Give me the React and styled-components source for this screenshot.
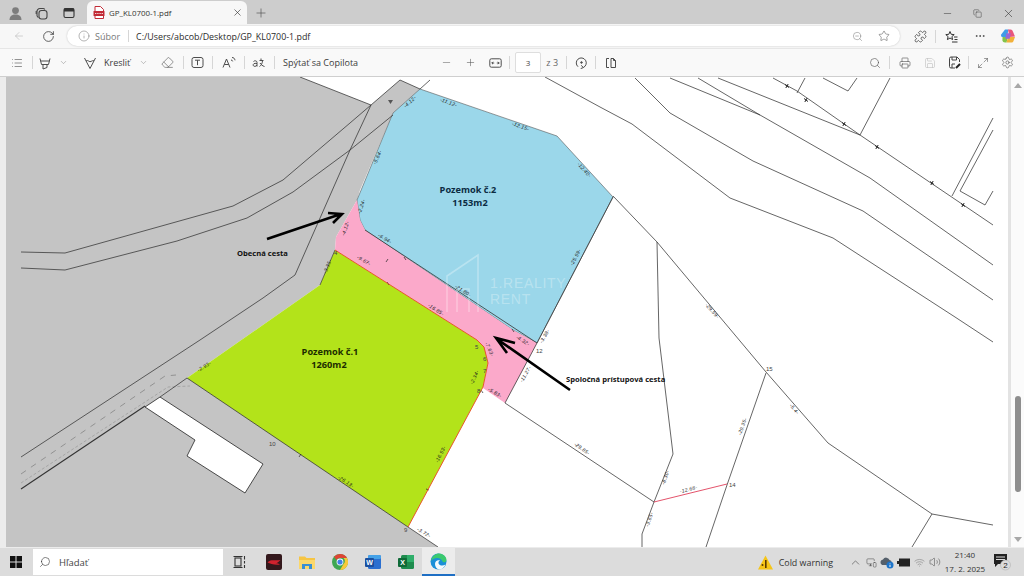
import styled, { createGlobalStyle } from 'styled-components';
import {
  ArrowLeft, ChevronDown, ChevronUp, Ellipsis, Eraser, Info, List, Maximize2, Minus, Plus, Printer,
  Puzzle, RotateCw, Save, Search, Settings, Star, Volume2, Wifi, X, ZoomOut, Copy, MonitorSmartphone,
} from 'lucide-react';

const GlobalStyle = createGlobalStyle`
  html, body {
    margin: 0;
    width: 1024px;
    height: 576px;
    overflow: hidden;
    background: #ffffff;
    font-family: "Open Sans", "Liberation Sans", sans-serif;
  }
`;

const Screen = styled.div`
  display: flex;
  flex-direction: column;
  width: 1024px;
  height: 576px;
`;

const TabStrip = styled.div`
  display: flex;
  align-items: flex-end;
  height: 24px;
  flex: none;
  padding-left: 5px;
  background: #cdcdcd;
  box-sizing: border-box;
`;

const Slot = styled.div`
  display: flex;
  align-items: center;
  justify-content: center;
  flex: none;
  width: ${(p) => p.$w || 18}px;
  height: ${(p) => p.$h || 22}px;
  margin-left: ${(p) => p.$ml || 0}px;
  color: ${(p) => p.$color || '#4d4d4d'};
`;

const Tab = styled.div`
  display: flex;
  align-items: center;
  width: 160px;
  height: 23px;
  margin-left: 8px;
  padding: 0 4px 0 6px;
  box-sizing: border-box;
  background: #f7f7f7;
  border-radius: 6px 6px 0 0;
`;

const TabTitle = styled.span`
  flex: 1;
  margin-left: 4px;
  font-size: 7.9px;
  color: #333333;
`;

const Spacer = styled.div`
  flex: 1;
`;

const AddressRow = styled.div`
  display: flex;
  align-items: center;
  height: 24px;
  flex: none;
  padding-left: 9px;
  background: #f7f7f7;
  box-sizing: border-box;
`;

const AddressPill = styled.div`
  display: flex;
  align-items: center;
  width: 833px;
  height: 20px;
  margin-left: 9px;
  padding-left: 11px;
  box-sizing: border-box;
  background: #ffffff;
  border-radius: 10px;
  box-shadow: 0 0 2px rgba(0, 0, 0, 0.22);
`;

const Scheme = styled.span`
  margin-left: 5px;
  font-size: 9px;
  color: #777777;
`;

const Url = styled.span`
  font-size: 8.9px;
  color: #2b2b2b;
`;

const Rule = styled.div`
  flex: none;
  width: 1px;
  height: ${(p) => p.$h || 13}px;
  margin-left: ${(p) => p.$ml || 0}px;
  margin-right: ${(p) => p.$mr || 0}px;
  background: #d6d6d6;
`;

const PdfBar = styled.div`
  display: flex;
  align-items: center;
  height: 29px;
  flex: none;
  padding-left: 6px;
  background: #f9f9f9;
  border-top: 1px solid #e6e6e6;
  border-bottom: 1px solid #cfcfcf;
  box-sizing: border-box;
`;

const BarText = styled.span`
  flex: none;
  width: ${(p) => p.$w}px;
  margin-left: ${(p) => p.$ml || 0}px;
  font-size: 9px;
  white-space: nowrap;
  color: ${(p) => p.$color || '#3b3b3b'};
`;

const PageBox = styled.div`
  display: flex;
  align-items: center;
  justify-content: center;
  flex: none;
  width: 26px;
  height: 21px;
  margin-left: 5px;
  font-size: 8px;
  color: #444444;
  background: #ffffff;
  border: 1px solid #dedede;
  border-radius: 2px;
  box-sizing: border-box;
`;

const Viewer = styled.div`
  display: flex;
  flex: 1;
  min-height: 0;
  background: #e9e9e9;
`;

const LeftGutter = styled.div`
  flex: none;
  width: 6px;
  background: #ececec;
`;

const MapPage = styled.svg`
  display: block;
  flex: none;
  width: 1002px;
  height: 470px;
  background: #ffffff;
`;

const ScrollTrack = styled.div`
  display: flex;
  flex-direction: column;
  align-items: center;
  flex: none;
  width: 16px;
  height: 470px;
  padding: 6px 0 5px;
  box-sizing: border-box;
  background: #fbfbfb;
  border-left: 3px solid #e3e3e3;
`;

const ScrollArrow = styled.div`
  flex: none;
  width: 0;
  height: 0;
  border-left: 4px solid transparent;
  border-right: 4px solid transparent;
  ${(p) => (p.$down ? 'border-top: 5px solid #a8a8a8;' : 'border-bottom: 5px solid #a8a8a8;')}
`;

const ThumbLane = styled.div`
  flex: 1;
`;

const Thumb = styled.div`
  width: 6px;
  height: 96px;
  margin-top: 308px;
  background: #8e8e8e;
  border-radius: 3px;
`;

const Taskbar = styled.div`
  display: flex;
  align-items: center;
  height: 29px;
  flex: none;
  padding-left: 6px;
  background: #dcdcdc;
  border-top: 1px solid #ececec;
  box-sizing: border-box;
`;

const SearchBox = styled.div`
  display: flex;
  align-items: center;
  flex: none;
  width: 190px;
  height: 26px;
  margin-left: 7px;
  padding-left: 6px;
  box-sizing: border-box;
  background: #ffffff;
  font-size: 9.5px;
  color: #444444;
`;

const SearchGlyph = styled(Search)`
  transform: scaleX(-1);
`;

const SearchLabel = styled.span`
  margin-left: 8px;
`;

const TaskApp = styled.div`
  display: flex;
  align-items: center;
  justify-content: center;
  flex: none;
  width: 33px;
  height: 28px;
  box-sizing: border-box;
  margin-left: ${(p) => p.$ml || 0}px;
  ${(p) => p.$active && 'background: #ececec; border-bottom: 2px solid #1f6fc4;'}
`;

const Weather = styled.span`
  flex: none;
  margin-left: 6px;
  font-size: 8.9px;
  color: #333333;
`;

const Clock = styled.div`
  display: flex;
  flex-direction: column;
  align-items: center;
  flex: none;
  width: 44px;
  font-size: 8px;
  line-height: 14px;
  color: #333333;
`;

const PlotLabel = styled.text`
  font-family: "Open Sans", "Liberation Sans", sans-serif;
  font-size: 9.2px;
  font-weight: 700;
  text-anchor: middle;
  fill: ${(p) => p.$fill};
`;

const NoteLabel = styled.text`
  font-family: "Open Sans", "Liberation Sans", sans-serif;
  font-size: 7.6px;
  font-weight: 700;
  fill: #111111;
`;

const DimLabel = styled.text`
  font-family: "Liberation Sans", sans-serif;
  font-size: 5px;
  font-style: italic;
  letter-spacing: 0.3px;
  text-anchor: middle;
  fill: #1c1c1c;
`;

const PointLabel = styled.text`
  font-family: "Liberation Sans", sans-serif;
  font-size: 6px;
  fill: #444444;
`;

const Watermark = styled.text`
  font-family: "Liberation Sans", sans-serif;
  font-size: 14px;
  letter-spacing: 0.7px;
  fill: #ffffff;
  fill-opacity: 0.3;
`;

const dims = [
  ['-4.12-', 411, 103, -42], ['-11.12-', 448, 104, 20], ['-12.15-', 520, 128, 20], ['-12.40-', 583, 171, 48],
  ['-5.64-', 379, 158, -65], ['-2.24-', 363, 207, -70], ['-6.94-', 384, 240, 30], ['-21.80-', 462, 292, 32],
  ['-4.32-', 522, 342, 32], ['-25.59-', 577, 258, -62], ['-3.38-', 546, 337, -60], ['-9.67-', 363, 262, 30],
  ['-16.85-', 435, 311, 32], ['-11.27-', 527, 375, -60], ['-5.83-', 494, 394, 30], ['-2.34-', 476, 378, -65],
  ['-7.63-', 488, 350, 65], ['-29.85-', 581, 450, 35], ['-29.59-', 711, 312, 48], ['-5.4-', 793, 410, 50],
  ['-29.35-', 744, 427, -70], ['-8.30-', 667, 478, -70], ['-12.68-', 689, 491, -15], ['-3.65-', 651, 520, -70],
  ['-26.13-', 345, 483, 33], ['-16.53-', 442, 455, -63], ['-3.72-', 423, 534, 30], ['-2.93-', 205, 368, -30],
  ['-3.35-', 329, 267, -68], ['-4.12-', 347, 229, -70],
];

const points = [
  ['12', 536, 353], ['15', 766, 371], ['14', 729, 487], ['10', 269, 446], ['9', 404, 532], ['4', 334, 255],
  ['5', 475, 349], ['6', 483, 361], ['7', 483, 373], ['8', 477, 393],
];

const crosses = [[787, 86], [806, 100], [844, 124], [877, 147], [932, 183], [963, 205]];

const ticks = ['404,257 406,260', '387,282 389,285', '512,329 514,332', '481,390 483,393', '386,262 388,259', '301,454 299,457', '429,490 426,489'];

const lines = [
  '300,77 371,105', '21,252 65,253 233,206 283,180 350,123 371,105 400,80',
  '21,268 65,270 177,241 247,218 293,192 350,150 393,115',
  '200,340 263,298 295,275 350,150 371,105', '21,457 200,340', '400,80 420,89 430,80',
  '545,77 600,107 632,124 730,198 833,238 955,317 993,342', '635,78 670,113 753,161 863,211 993,300',
  '698,78 760,115 870,178 993,265', '670,78 760,115', '718,78 860,135', '773,78 797,91 860,135 993,225',
  '890,78 860,135', '797,93 805,78', '823,78 848,91 857,78', '993,118 952,196',
  '993,130 960,191 985,205 993,191', '613,196 657,242 766,372 828,443 932,514 993,525', '932,514 912,547',
  '657,242 659,338 673,454 654,502 642,534 642,547', '766,373 727,485 706,547', '505,403 654,502',
  '408,527 438,547', '537,343 505,403', '613,197 537,343', '160,397 187,378',
];

const LandMap = () => (
  <MapPage viewBox="6 77 1002 470">
    <polygon fill="#c4c4c4" points="6,77 300,77 371,105 400,80 420,89 393,113 360,190 357,200 336,237 335,250 320,285 187,378 408,527 438,547 6,547" />
    <polygon fill="#ffffff" points="145,407 160,397 263,464 245,493 187,456 195,440" stroke="#222222" strokeWidth="0.8" />
    <polygon fill="#9bd7ea" stroke="#555555" strokeWidth="0.6" points="420,89 557,136 613,197 537,343 513,330 365,230 360,220 357,200 393,113" />
    <polygon fill="#fba9ca" points="357,200 360,220 365,230 513,330 537,343 505,403 483,388 488,363 477,340 335,250 336,237" />
    <polygon fill="#b3e31a" points="335,250 477,340 484,347 488,363 483,387 408,527 187,378 320,285" />
    <polyline fill="none" stroke="#333333" strokeWidth="0.8" points="187,378 408,527" />
    <polyline fill="none" stroke="#333333" strokeWidth="0.8" points="365,230 537,343" />
    <polyline fill="none" stroke="#333333" strokeWidth="0.7" points="320,285 335,250" />
    <polyline fill="none" stroke="#333333" strokeWidth="1.1" points="21,489 145,406" />
    <polyline fill="none" stroke="#6f6f6f" strokeWidth="0.6" strokeDasharray="6 6" points="21,474 165,376 176,375" />
    <polyline fill="none" stroke="#808080" strokeWidth="0.45" strokeDasharray="3 2" points="21,483 168,387 190,386" />
    {lines.map((pts) => (
      <polyline key={pts} fill="none" stroke="#333333" strokeWidth="0.75" points={pts} />
    ))}
    {ticks.map((pts) => (
      <polyline key={pts} fill="none" stroke="#222222" strokeWidth="0.7" points={pts} />
    ))}
    <polyline fill="none" stroke="#e8562a" strokeWidth="1" points="335,250 477,340 484,347 488,363 483,387 408,527" />
    <polyline fill="none" stroke="#e0405a" strokeWidth="0.9" points="654,502 727,484" />
    <path d="M388 100l2.500 4 2.500-4z" fill="#555555" />
    {crosses.map(([x, y]) => (
      <path key={x} d={`M${x - 2} ${y - 1.5}l4 3M${x - 1.2} ${y + 2}l2.4-4`} stroke="#222222" strokeWidth="1" />
    ))}
    <g fill="none" stroke="#ffffff" strokeOpacity="0.3" strokeWidth="1.6">
      <path d="M447 312V276l31-21v57M457 312v-23h12v23" />
    </g>
    <Watermark x="490" y="287.500">1.REALITY</Watermark>
    <Watermark x="490" y="303.500">RENT</Watermark>
    {dims.map(([t, x, y, r]) => (
      <DimLabel key={`${t}${x}`} x={x} y={y} transform={`rotate(${r} ${x} ${y})`}>{t}</DimLabel>
    ))}
    {points.map(([t, x, y]) => (
      <PointLabel key={t} x={x} y={y}>{t}</PointLabel>
    ))}
    <PlotLabel x="468" y="193" $fill="#0b2b42">Pozemok č.2</PlotLabel>
    <PlotLabel x="470" y="206" $fill="#0b2b42">1153m2</PlotLabel>
    <PlotLabel x="330" y="355" $fill="#1c2c00">Pozemok č.1</PlotLabel>
    <PlotLabel x="329" y="368" $fill="#1c2c00">1260m2</PlotLabel>
    <NoteLabel x="237" y="256">Obecná cesta</NoteLabel>
    <NoteLabel x="566" y="382">Spoločná prístupová cesta</NoteLabel>
    <g fill="none" stroke="#000000" strokeWidth="2.6">
      <path d="M267 239L341 214M328 213l14 1-9 9" />
      <path d="M570 390L497 339M515 343l-19-5 11 15" />
    </g>
  </MapPage>
);

const icon = { size: 12, strokeWidth: 1.3 };

const ProfileIcon = () => (
  <svg width="15" height="15" viewBox="0 0 15 15"><circle cx="7.5" cy="4.6" r="3.4" fill="#7d7d7d" /><path d="M1.5 14c0-4 2.6-5.6 6-5.6s6 1.600 6 5.600z" fill="#7d7d7d" /></svg>
);

const WorkspaceIcon = () => (
  <svg width="13" height="13" viewBox="0 0 13 13" fill="none" stroke="#444" strokeWidth="1.1"><rect x="4" y="3.500" width="8" height="8.500" rx="2.500" /><path d="M3.500 10.500A2.500 2.500 0 0 1 2 8.500V5a3 3 0 0 1 3-3.500h3a2 2 0 0 1 1.800 1" /><path d="M1.200 7V4" /></svg>
);

const VerticalTabsIcon = () => (
  <svg width="12" height="12" viewBox="0 0 12 12"><rect x="1" y="1.500" width="10" height="9" rx="1.500" fill="none" stroke="#333" strokeWidth="1.100" /><rect x="1" y="1.500" width="10" height="3" fill="#333" /></svg>
);

const PdfFavicon = () => (
  <svg width="12" height="13" viewBox="0 0 12 13"><path d="M2 .5h5.500L10.500 3.500V12.500H2z" fill="#fff" stroke="#c22b36" /><rect x=".5" y="5" width="11" height="5" rx=".6" fill="#c22b36" /><path d="M2 7.500h8" stroke="#fff" strokeWidth=".8" strokeDasharray="1.400 .8" /></svg>
);

const CopilotIcon = () => (
  <svg width="16" height="16" viewBox="0 0 16 16"><path d="M5 1.500h3.500L7 9H2.500C1 9 .8 7.800 1.200 6.500z" fill="#3f9be8" /><path d="M8 1.500h2.500c1.300 0 2 .8 2.400 2L15 8.500 9.500 9z" fill="#e8577c" /><path d="M2.500 9H8l-1.500 5.500H5c-1.500 0-2.200-.8-2.600-2z" fill="#83c44a" /><path d="M8 9h7l-1.500 4c-.5 1.100-1.100 1.500-2.300 1.500H6.500z" fill="#f2b13a" /><path d="M6.500 5.200h4.200l-1 5.500H5.300z" fill="#9a66d6" /></svg>
);

const FavoritesIcon = () => (
  <svg width="13" height="13" viewBox="0 0 13 13" fill="none" stroke="#333" strokeWidth="1"><path d="M5 1.500l1.200 2.800 3 .3-2.300 2 .7 3L5 8 2.400 9.600l.7-3L.8 4.600l3-.3zM9 7h3.500M9.500 9.500h3M7 12h5.500" /></svg>
);

const HighlightIcon = () => (
  <svg width="14" height="14" viewBox="0 0 14 14" fill="none" stroke="#4d4d4d" strokeWidth="1"><path d="M2 2.500l1.500 6h7l1.500-6M2.600 5h8.800M5 8.500V13l4-1.500v-3" /></svg>
);

const DrawIcon = () => (
  <svg width="14" height="14" viewBox="0 0 14 14" fill="none" stroke="#4d4d4d" strokeWidth="1"><path d="M1.500 2L7 12.500 12.500 2M3 5c2-1.600 3.500 1.600 5 .5 1.200-.8 2-1 3-.8" /></svg>
);

const TextBoxIcon = () => (
  <svg width="13" height="13" viewBox="0 0 13 13" fill="none" stroke="#4d4d4d" strokeWidth="1"><rect x="1" y="1.500" width="11" height="10" rx="2" /><path d="M4 4.200h5M6.500 4.200v5" /></svg>
);

const ReadAloudIcon = () => (
  <svg width="14" height="13" viewBox="0 0 14 13" fill="none" stroke="#4d4d4d" strokeWidth="1"><path d="M1 11.500L4.500 3 8 11.500M2.300 8.500h4.400M9 4c1 0 1.500.6 1.700 1.400M10 1.500c1.700 0 2.800 1.100 3 2.800" /></svg>
);

const TranslateIcon = () => (
  <svg width="14" height="12" viewBox="0 0 14 12" fill="none" stroke="#4d4d4d" strokeWidth="1"><path d="M1.500 4.500c1-1.200 3.500-.8 3.500.8V9.500M5 6.500c-3-.6-4 .6-3.800 1.800.3 1.400 2.800 1.500 3.800-.2M9 1.500v2M7.500 3.500h4M10.500 3.500c0 3-1.500 5-3 6M8 6c1 1.500 2.500 3 4.500 3.500" /></svg>
);

const FitWidthIcon = () => (
  <svg width="13" height="12" viewBox="0 0 13 12" fill="none" stroke="#4d4d4d" strokeWidth="1"><rect x=".8" y="1.800" width="11.400" height="8.400" rx="1.500" /><path d="M2.800 6h2.400M4 4.800L2.800 6 4 7.200M10.200 6H7.800M9 4.800L10.200 6 9 7.200" /></svg>
);

const RotateIcon = () => (
  <svg width="13" height="13" viewBox="0 0 13 13" fill="none" stroke="#4d4d4d" strokeWidth="1"><path d="M3 10.700A5 5 0 1 1 8.300 11.500M6.300 9.300l2 2.300-2.600 1" /><circle cx="6.500" cy="6.500" r=".8" fill="#4d4d4d" /></svg>
);

const TwoPageIcon = () => (
  <svg width="13" height="12" viewBox="0 0 13 12" fill="none" stroke="#4d4d4d" strokeWidth="1"><path d="M5 1.500H2.500v9H5M7 1.500h2.500l2 2v7H7z" /><path d="M9.500 1.500v2h2" /></svg>
);

const SaveAsIcon = () => (
  <svg width="13" height="13" viewBox="0 0 13 13" fill="none" stroke="#444" strokeWidth="1"><path d="M7 12H3a1.500 1.500 0 0 1-1.500-1.500v-8A1.500 1.500 0 0 1 3 1h6l2.500 2.500V6M4 1v3h4.500V1M4 12V8h3" /><path d="M8 12l4-4" strokeWidth="2" stroke="#222" /></svg>
);

const WindowsLogo = () => (
  <svg width="12" height="12" viewBox="0 0 12 12" fill="#111"><rect width="5.500" height="5.500" /><rect x="6.500" width="5.500" height="5.500" /><rect y="6.500" width="5.500" height="5.500" /><rect x="6.500" y="6.500" width="5.500" height="5.500" /></svg>
);

const TaskViewIcon = () => (
  <svg width="14" height="14" viewBox="0 0 14 14" fill="none" stroke="#333" strokeWidth="1.100"><rect x="2" y="3" width="6" height="8" /><path d="M.5 1.500h9M.5 12.500h9M11.500 1v3.500M11.500 6v2.500M11.500 10v3" /></svg>
);

const GameIcon = () => (
  <svg width="16" height="16" viewBox="0 0 16 16"><rect width="16" height="16" rx="2" fill="#33181c" /><path d="M1.500 8.500c3-3.500 7-1.500 13-2.500-2 2-3 3-5 3.200 2 0 3.200.2 4.500 1.300-5.500 1-9.500-1-12.500-2z" fill="#d0222e" /></svg>
);

const ExplorerIcon = () => (
  <svg width="16" height="15" viewBox="0 0 16 15"><path d="M0 1.500h6l1.500 1.500H16V13H0z" fill="#f6c544" /><rect y="5" width="16" height="9" fill="#fbd86c" /><rect x="3" y="9" width="10" height="5" fill="#3a8fd4" /><rect x="6" y="11" width="4" height="3" fill="#fbd86c" /></svg>
);

const ChromeIcon = () => (
  <svg width="16" height="16" viewBox="0 0 16 16"><circle cx="8" cy="8" r="8" fill="#3da752" /><path d="M8 0a8 8 0 0 1 7 4H8a4 4 0 0 0-3.500 2L2 2.800A8 8 0 0 1 8 0z" fill="#de4535" /><path d="M15 4a8 8 0 0 1-7 12l3.500-6a4 4 0 0 0 0-6z" fill="#f8c93a" /><circle cx="8" cy="8" r="3.400" fill="#fff" /><circle cx="8" cy="8" r="2.600" fill="#3f7fe6" /></svg>
);

const WordIcon = () => (
  <svg width="16" height="16" viewBox="0 0 16 16"><rect x="3" y="1" width="13" height="14" rx="1.500" fill="#2b6fd0" /><rect x="3" y="1" width="13" height="4" rx="1.500" fill="#45a2e8" /><rect y="4" width="9" height="9" rx="1" fill="#1b4f9e" /><text x="4.500" y="11" fontSize="7" fontWeight="700" textAnchor="middle" fill="#fff" fontFamily="Liberation Sans">W</text></svg>
);

const ExcelIcon = () => (
  <svg width="16" height="16" viewBox="0 0 16 16"><rect x="3" y="1" width="13" height="14" rx="1.500" fill="#1e8c4e" /><rect x="9" y="1" width="7" height="7" fill="#2fae6a" /><rect y="4" width="9" height="9" rx="1" fill="#0f6a37" /><text x="4.500" y="11" fontSize="7" fontWeight="700" textAnchor="middle" fill="#fff" fontFamily="Liberation Sans">X</text></svg>
);

const EdgeIcon = () => (
  <svg width="17" height="17" viewBox="0 0 17 17"><circle cx="8.500" cy="8.500" r="8" fill="#1a8fd8" /><path d="M1 8C2 2.500 6 .5 9 .5c4 0 7.500 3 7.500 6.500 0 2.500-3 3-4 1.500C11.500 6 9 4.500 6.500 5 3.500 5.600 1.500 7 1 8z" fill="#3bc96f" /><path d="M5 11c0-3 2.500-4.500 5-3.600-1.700.6-2 2.400-1 3.800 1.200 1.600 4 2 6.500.4C13.800 15.500 11 16.500 9 16.500 6.500 16 5 13.500 5 11z" fill="#fff" opacity=".95" /></svg>
);

const WarningIcon = () => (
  <svg width="15" height="15" viewBox="0 0 15 15"><path d="M7.500 .5L15 14.500H0z" fill="#f5c518" /><rect x="7" y="5" width="1.600" height="8" fill="#5c3a00" /><circle cx="4.500" cy="10" r="1" fill="#5c3a00" /></svg>
);

const OneDriveBadge = () => (
  <svg width="14" height="13" viewBox="0 0 14 13"><path d="M2 9a3 3 0 0 1 1-5.600A3.600 3.600 0 0 1 9.500 4 2.600 2.600 0 0 1 10 9z" fill="#55606b" /><circle cx="10" cy="9" r="3.500" fill="#1d74c9" /><path d="M10 7.500v.8M10 9v2" stroke="#fff" /></svg>
);

const BatteryIcon = () => (
  <svg width="13" height="9" viewBox="0 0 13 9"><rect x="2" y=".5" width="11" height="8" fill="#222" /><rect y="3" width="2" height="3" fill="#222" /></svg>
);

const NotifyIcon = () => (
  <svg width="19" height="18" viewBox="0 0 19 18"><path d="M1 1h13v10H5l-3 3v-3H1z" fill="#222" /><path d="M3 4h9M3 6.500h9" stroke="#dcdcdc" /><circle cx="12.500" cy="12" r="5" fill="#dcdcdc" stroke="#aaa" strokeWidth=".5" /><text x="12.500" y="14.700" fontSize="8" textAnchor="middle" fill="#222" fontFamily="Liberation Sans">2</text></svg>
);

const App = () => (
  <Screen>
    <GlobalStyle />
    <TabStrip>
      <Slot $w={20}><ProfileIcon /></Slot>
      <Slot $w={20} $ml={6}><WorkspaceIcon /></Slot>
      <Slot $w={20} $ml={8}><VerticalTabsIcon /></Slot>
      <Tab>
        <PdfFavicon />
        <TabTitle>GP_KL0700-1.pdf</TabTitle>
        <X size={11} strokeWidth={1.4} color="#333333" />
      </Tab>
      <Slot $w={20} $ml={4}><Plus size={14} strokeWidth={1.1} /></Slot>
      <Spacer />
      <Slot $w={30} $color="#333333"><Minus size={11} strokeWidth={1.1} /></Slot>
      <Slot $w={30} $color="#333333"><Copy size={9} strokeWidth={1.2} /></Slot>
      <Slot $w={31} $ml={1} $color="#333333"><X size={13} strokeWidth={1.1} /></Slot>
    </TabStrip>

    <AddressRow>
      <Slot $w={20} $color="#bcbcbc"><ArrowLeft {...icon} /></Slot>
      <Slot $w={20} $ml={9} $color="#333333"><RotateCw size={13} strokeWidth={1.4} /></Slot>
      <AddressPill>
        <Info size={12} strokeWidth={1.1} color="#777777" />
        <Scheme>Súbor</Scheme>
        <Rule $h={12} $ml={8} $mr={7} />
        <Url>C:/Users/abcob/Desktop/GP_KL0700-1.pdf</Url>
        <Spacer />
        <Slot $w={14} $color="#777777"><ZoomOut size={11} strokeWidth={1.1} /></Slot>
        <Slot $w={14} $ml={13} $color="#555555"><Star size={12} strokeWidth={1.1} /></Slot>
        <Slot $w={9} />
      </AddressPill>
      <Slot $w={20} $ml={10} $color="#333333"><Puzzle size={13} strokeWidth={1.3} /></Slot>
      <Rule $ml={5} $mr={5} />
      <Slot $w={20}><FavoritesIcon /></Slot>
      <Slot $w={20} $ml={9} $color="#333333"><Ellipsis size={12} strokeWidth={1.4} /></Slot>
      <Slot $w={20} $ml={8}><CopilotIcon /></Slot>
    </AddressRow>

    <PdfBar>
      <Slot $w={22}><List size={12} strokeWidth={1.2} /></Slot>
      <Rule $ml={4} $mr={3} />
      <Slot><HighlightIcon /></Slot>
      <Slot $color="#777777"><ChevronDown size={9} strokeWidth={1.2} /></Slot>
      <Slot $ml={9}><DrawIcon /></Slot>
      <BarText $w={30} $ml={5}>Kresliť</BarText>
      <Slot $color="#777777"><ChevronDown size={9} strokeWidth={1.2} /></Slot>
      <Slot $ml={6}><Eraser size={13} strokeWidth={1.1} /></Slot>
      <Rule $ml={7} $mr={4} />
      <Slot><TextBoxIcon /></Slot>
      <Rule $ml={6} $mr={6} />
      <Slot $ml={1}><ReadAloudIcon /></Slot>
      <Rule $ml={6} $mr={5} />
      <Slot><TranslateIcon /></Slot>
      <Rule $ml={6} $mr={8} />
      <BarText $w={154}>Spýtať sa Copilota</BarText>
      <Slot><Minus size={11} strokeWidth={1.2} color="#666666" /></Slot>
      <Slot $ml={6}><Plus size={11} strokeWidth={1.2} color="#555555" /></Slot>
      <Slot $ml={7}><FitWidthIcon /></Slot>
      <Rule $ml={5} />
      <PageBox>3</PageBox>
      <BarText $w={18} $ml={3} $color="#666666">&nbsp;z 3</BarText>
      <Rule $ml={4} $mr={5} />
      <Slot><RotateIcon /></Slot>
      <Rule $ml={5} $mr={5} />
      <Slot><TwoPageIcon /></Slot>
      <Spacer />
      <Slot><Search size={12} strokeWidth={1.2} /></Slot>
      <Rule $ml={5} $mr={6} />
      <Slot><Printer size={12} strokeWidth={1.2} /></Slot>
      <Slot $ml={7} $color="#bdbdbd"><Save size={12} strokeWidth={1.2} /></Slot>
      <Slot $ml={6}><SaveAsIcon /></Slot>
      <Rule $ml={5} $mr={5} />
      <Slot><Maximize2 size={12} strokeWidth={1.1} /></Slot>
      <Slot $ml={6}><Settings size={13} strokeWidth={1.1} /></Slot>
      <Slot $w={8} />
    </PdfBar>

    <Viewer>
      <LeftGutter />
      <LandMap />
      <ScrollTrack>
        <ScrollArrow />
        <ThumbLane><Thumb /></ThumbLane>
        <ScrollArrow $down />
      </ScrollTrack>
    </Viewer>

    <Taskbar>
      <Slot $w={20}><WindowsLogo /></Slot>
      <SearchBox>
        <SearchGlyph size={12} strokeWidth={1.2} color="#333333" />
        <SearchLabel>Hľadať</SearchLabel>
      </SearchBox>
      <Slot $w={20} $ml={7}><TaskViewIcon /></Slot>
      <TaskApp $ml={7}><GameIcon /></TaskApp>
      <TaskApp><ExplorerIcon /></TaskApp>
      <TaskApp><ChromeIcon /></TaskApp>
      <TaskApp><WordIcon /></TaskApp>
      <TaskApp><ExcelIcon /></TaskApp>
      <TaskApp $active><EdgeIcon /></TaskApp>
      <Spacer />
      <WarningIcon />
      <Weather>Cold warning</Weather>
      <Slot $w={16} $ml={14}><ChevronUp size={13} strokeWidth={1.2} /></Slot>
      <Slot $w={16}><MonitorSmartphone size={11} strokeWidth={1.2} /></Slot>
      <Slot $w={16}><OneDriveBadge /></Slot>
      <Slot $w={16}><BatteryIcon /></Slot>
      <Slot $w={16} $color="#777777"><Wifi size={11} strokeWidth={1.2} /></Slot>
      <Slot $w={16}><Volume2 size={12} strokeWidth={1.1} /></Slot>
      <Clock><span>21:40</span><span>17. 2. 2025</span></Clock>
      <Slot $w={20} $ml={5}><NotifyIcon /></Slot>
      <Slot $w={12} />
    </Taskbar>
  </Screen>
);

export default App;
